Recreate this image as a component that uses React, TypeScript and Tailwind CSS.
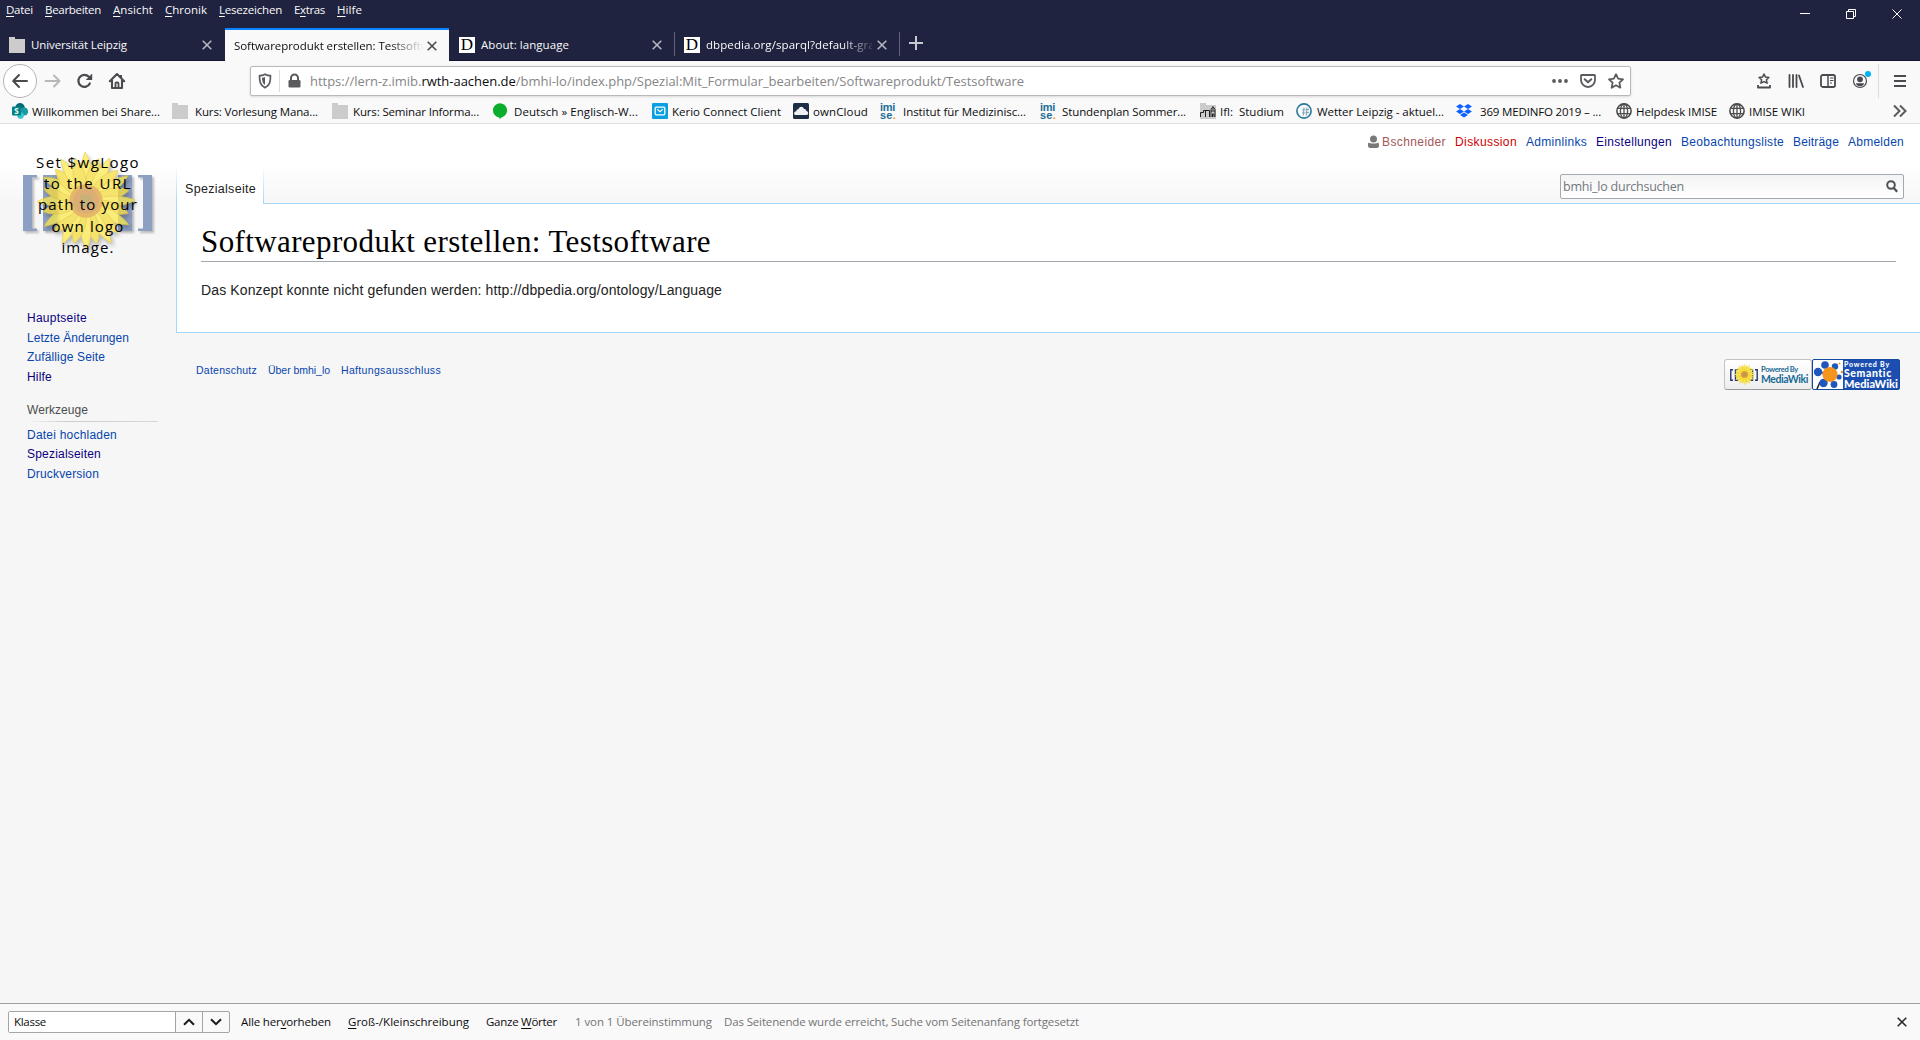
import React, { useLayoutEffect, useRef, useState } from 'react';

const UI = "font-['Open_Sans','Noto_Sans',sans-serif]";
const SANS = "font-['Liberation_Sans',Arial,sans-serif]";

/* Text run whose letter spacing is adjusted so that it fills a given width. */
function Fit({ w, className = '', children }: { w: number; className?: string; children: React.ReactNode }) {
  const ref = useRef<HTMLSpanElement>(null);
  const [ls, setLs] = useState(0);
  useLayoutEffect(() => {
    const el = ref.current;
    if (!el) return;
    const n = (el.textContent || '').length;
    setLs((w - el.getBoundingClientRect().width) / n);
  }, [w]);
  return (
    <span className={`block shrink-0 whitespace-nowrap ${className}`} style={{ width: w }}>
      <span ref={ref} style={{ letterSpacing: ls }}>{children}</span>
    </span>
  );
}

const Folder = () => (
  <svg width="16" height="16" viewBox="0 0 16 16" className="shrink-0"><path d="M0 0h6v2h10v14H0z" fill="#ccc" /></svg>
);
const Cross = ({ color }: { color: string }) => (
  <svg width="10" height="10" viewBox="0 0 10 10" className="shrink-0"><path d="M.7.7l8.6 8.6M9.3.7L.7 9.3" stroke={color} strokeWidth="1.6" /></svg>
);
const DIcon = () => (
  <span className="flex h-4 w-4 shrink-0 items-center justify-center bg-white font-['Liberation_Serif',serif] text-[17px] leading-4 text-black">D</span>
);
const Globe = () => (
  <svg width="16" height="16" viewBox="0 0 16 16" className="shrink-0" fill="none" stroke="#4d4d4f" strokeWidth="1.3">
    <circle cx="8" cy="8" r="7.1" strokeWidth="1.6" /><ellipse cx="8" cy="8" rx="3.6" ry="7" /><path d="M1.6 5.3h12.8M1.6 10.7h12.8M8 1v14" />
  </svg>
);
const Imise = () => (
  <span className="block h-4 w-4 shrink-0 font-['Liberation_Sans',sans-serif] text-[11px] font-bold leading-[8px] text-[#1c6e96]">
    <Fit w={15}>imi</Fit><Fit w={16}>se<span className="text-[#f39a1d]">.</span></Fit>
  </span>
);
const SharePoint = () => (
  <svg width="16" height="16" viewBox="0 0 16 16" className="shrink-0">
    <circle cx="8" cy="4.8" r="4.8" fill="#036c70" /><circle cx="12" cy="8.5" r="4" fill="#1a9ba1" /><circle cx="8.5" cy="12.6" r="3.3" fill="#37c6d0" />
    <rect x="0" y="3.5" width="9" height="9" rx=".8" fill="#038387" />
    <text x="4.5" y="10.8" textAnchor="middle" fontSize="8" fontWeight="700" fill="#fff" fontFamily="Open Sans">S</text>
  </svg>
);
const Bubble = () => (
  <svg width="16" height="16" viewBox="0 0 16 16" className="shrink-0"><path d="M7.500 .2a7.400 7.200 0 0 1 2.600 14L7.300 16v-1.500A7.300 7.200 0 0 1 7.500 .2z" fill="#0aad2c" /></svg>
);
const Kerio = () => (
  <svg width="16" height="16" viewBox="0 0 16 16" className="shrink-0"><rect width="16" height="16" rx="1" fill="#0a9fe0" /><rect x="3.200" y="4.200" width="9.600" height="7.600" rx="1" fill="none" stroke="#fff" strokeWidth="1.300" /><path d="M5.200 6.200L8 8.800l2.800-2.600" fill="none" stroke="#fff" strokeWidth="1.200" /></svg>
);
const OwnCloud = () => (
  <svg width="16" height="16" viewBox="0 0 16 16" className="shrink-0"><rect width="16" height="16" rx="1.5" fill="#1d2d44" /><path d="M2 11.900c-2-1.500-.2-4 1.200-3.300C3.400 6.500 4.600 6 5.500 6.300 6 3 10 2.700 11 6c1.600-.3 2.300.8 2.300 2 2.500.5 2.300 3.500.7 4z" fill="#eef1f5" /></svg>
);
const House = () => (
  <svg width="16" height="16" viewBox="0 0 16 16" className="shrink-0"><path d="M0 0h6v2h10v14H0z" fill="#ccc" /><path d="M.5 14V9.500h3V7.500h6v6.500M5.500 14V8M11 14V6.500l2-3 2 3V14M12.500 14v-3h1.500v3M11 8h4M12 6h2" fill="none" stroke="#222" strokeWidth="1" /></svg>
);
const Wetter = () => (
  <svg width="16" height="16" viewBox="0 0 16 16" className="shrink-0" fill="none"><circle cx="8" cy="8" r="7.100" stroke="#2a7699" strokeWidth="1.600" /><path d="M8 4.500l-.7 8M11 4.500l-.7 8M6 7l7-.6M6 10l7-.6" stroke="#7fa3b8" strokeWidth="1.100" /></svg>
);
const Dropbox = () => (
  <svg width="16" height="16" viewBox="0 0 16 16" className="shrink-0"><path d="M4 1l4 2.500L4 6 0 3.500zM12 1l4 2.500L12 6 8 3.500zM4 6l4 2.500L4 11 0 8.500zM12 6l4 2.500-4 2.500-4-2.500zM8 9.500l4 2.400L8 14.500l-4-2.600z" fill="#0f62fe" /></svg>
);

const menu: [string, number, string, string, string][] = [
  ['mr-3', 27, '', 'D', 'atei'],
  ['mr-3', 56, '', 'B', 'earbeiten'],
  ['mr-3', 40, '', 'A', 'nsicht'],
  ['mr-3', 42, '', 'C', 'hronik'],
  ['mr-3', 63, '', 'L', 'esezeichen'],
  ['mr-3', 31, 'E', 'x', 'tras'],
  ['', 25, '', 'H', 'ilfe'],
];

const bookmarks: [() => React.JSX.Element, string, string, number, string][] = [
  [SharePoint, 'ml-3', 'ml-1', 128, 'Willkommen bei Share...'],
  [Folder, 'ml-3', 'ml-[7px]', 123, 'Kurs: Vorlesung Mana...'],
  [Folder, 'ml-3.5', 'ml-[5px]', 126, 'Kurs: Seminar Informa...'],
  [Bubble, 'ml-[13px]', 'ml-1.5', 124, 'Deutsch » Englisch-W...'],
  [Kerio, 'ml-3.5', 'ml-1', 109, 'Kerio Connect Client'],
  [OwnCloud, 'ml-3', 'ml-1', 55, 'ownCloud'],
  [Imise, 'ml-3', 'ml-[7px]', 123, 'Institut für Medizinisc...'],
  [Imise, 'ml-3.5', 'ml-1.5', 124, 'Stundenplan Sommer...'],
  [House, 'ml-3.5', 'ml-1', 64, 'Ifl:\u00a0 Studium'],
  [Wetter, 'ml-3', 'ml-[5px]', 127, 'Wetter Leipzig - aktuel...'],
  [Dropbox, 'ml-3', 'ml-2', 121, '369 MEDINFO 2019 – ...'],
  [Globe, 'ml-[15px]', 'ml-1', 81, 'Helpdesk IMISE'],
  [Globe, 'ml-3', 'ml-1', 56, 'IMISE WIKI'],
];

const personal: [string, string, number][] = [
  ['Diskussion', 'text-[#c00]', 62],
  ['Adminlinks', 'text-[#0645ad]', 61],
  ['Einstellungen', 'text-[#0b0080]', 76],
  ['Beobachtungsliste', 'text-[#0645ad]', 103],
  ['Beiträge', 'text-[#0645ad]', 46],
  ['Abmelden', 'text-[#0645ad]', 56],
];

function MenuAndTabs() {
  return (
    <header className="flex h-[61px] shrink-0 flex-col border-b border-[#141631] bg-[#20233f] text-[11.500px] text-[#f9f9fa]">
      <div className="flex h-[29px] justify-between">
        <div className="flex pl-1.5 pt-0.5 leading-4">
          {menu.map(([gap, w, a, u, b]) => (
            <Fit key={u + b} w={w} className={gap}>{a}<span className="underline underline-offset-2">{u}</span>{b}</Fit>
          ))}
        </div>
        <svg width="138" height="28" viewBox="0 0 138 28" fill="none" stroke="#fff" strokeWidth="1">
          <path d="M18 13.500h10M64.500 11.500h7v7h-7zM66.500 11.500v-2h7v7h-2M110.500 9.500l9 9M119.500 9.500l-9 9" />
        </svg>
      </div>
      <div className="flex h-8 shrink-0 items-stretch">
        <div className="flex w-[225px] items-center pl-[9px] pt-px">
          <Folder /><Fit w={96} className="ml-1.5 pt-px">Universität Leipzig</Fit>
          <span className="ml-[75px]"><Cross color="#b5b6c1" /></span>
        </div>
        <div className="-mb-px flex w-56 items-center border-t-2 border-[#0a84ff] bg-[#f9f9fa] pl-[9px] text-[#0c0c0d]">
          <div className="w-[190px] overflow-hidden pt-px [mask-image:linear-gradient(to_right,black_155px,transparent_190px)]"><Fit w={213}>Softwareprodukt erstellen: Testsoftware</Fit></div>
          <span className="ml-[3px]"><Cross color="#4a4a4f" /></span>
        </div>
        <div className="flex w-[225px] items-center pl-2.5 pt-px">
          <DIcon /><Fit w={88} className="ml-1.5 pt-px">About: language</Fit>
          <span className="ml-[83px]"><Cross color="#b5b6c1" /></span>
        </div>
        <div className="my-1 w-px bg-[#62647a]" />
        <div className="flex w-56 items-center pl-[9px] pt-px">
          <DIcon />
          <div className="ml-1.5 w-[166px] overflow-hidden pt-px [mask-image:linear-gradient(to_right,black_135px,transparent_172px)]"><Fit w={183}>dbpedia.org/sparql?default-graph</Fit></div>
          <span className="ml-[5px]"><Cross color="#b5b6c1" /></span>
        </div>
        <div className="my-1 w-px bg-[#62647a]" />
        <svg width="32" height="30" viewBox="0 0 32 30"><path d="M16 8v14M9 15h14" stroke="#c7c8d1" strokeWidth="2" /></svg>
      </div>
    </header>
  );
}

function NavBar() {
  return (
    <div className="flex h-10 shrink-0 items-center bg-[#f9f9fa] text-[#4a4a4f]">
      <div className="ml-[3px] flex h-[34px] w-[34px] items-center justify-center rounded-full border border-[#b5b5b7] bg-white">
        <svg width="18" height="18" viewBox="0 0 18 18" fill="none" stroke="currentColor" strokeWidth="2" strokeLinecap="round" strokeLinejoin="round"><path d="M16 9H2.500M8 3L2.200 9 8 15" /></svg>
      </div>
      <svg className="ml-[7px]" width="18" height="18" viewBox="0 0 18 18" fill="none" stroke="#b8b8ba" strokeWidth="2" strokeLinecap="round" strokeLinejoin="round"><path d="M1.500 9h13.500M10 3.500L15.500 9 10 14.500" /></svg>
      <svg className="ml-[14px]" width="18" height="18" viewBox="0 0 18 18"><path d="M13.800 11.500A6 6 0 1 1 12.800 4.800" fill="none" stroke="currentColor" strokeWidth="2.200" strokeLinecap="round" /><path d="M16.200 1.600v6.400H9.800z" fill="currentColor" /></svg>
      <svg className="ml-[14px]" width="18" height="18" viewBox="0 0 18 18" fill="none" stroke="currentColor"><path d="M1.800 9.200L9 2l7.200 7.200M4 8v8h10V8" strokeWidth="2.100" strokeLinecap="round" strokeLinejoin="round" /><path d="M7.500 16v-4.500a1 1 0 0 1 1-1h1a1 1 0 0 1 1 1V16" strokeWidth="1.800" /><path d="M13 3v3" strokeWidth="2" /></svg>
      <div className="ml-[124px] flex h-[30px] w-[1381px] items-center rounded-[2px] border border-[#b9b9bb] bg-white shadow-sm">
        <svg className="ml-[7px]" width="14" height="16" viewBox="0 0 14 16"><path d="M7 1.200C5.500 2.200 3.500 2.700 1.500 2.700c0 6 .8 9.700 5.500 12 4.700-2.300 5.500-6 5.500-12-2 0-4-.5-5.500-1.500z" fill="none" stroke="#5b5b5f" strokeWidth="1.700" strokeLinejoin="round" /><path d="M7 4v8c-2.500-1.700-2.900-4-3-7.300C5.200 4.600 6.200 4.300 7 4z" fill="#5b5b5f" /></svg>
        <div className="ml-[7px] h-[22px] w-px bg-[#dcdcde]" />
        <svg className="ml-2" width="13" height="16" viewBox="0 0 13 16"><rect x=".5" y="7" width="12" height="7.500" rx="1.300" fill="#5b5b5f" /><path d="M3 8V5a3.500 3.500 0 0 1 7 0v3" fill="none" stroke="#5b5b5f" strokeWidth="2" /></svg>
        <Fit w={714} className="ml-[9px] pt-0.5 text-[13px] text-[#858587]">https://lern-z.imib.<span className="text-[#0c0c0d]">rwth-aachen.de</span>/bmhi-lo/index.php/Spezial:Mit_Formular_bearbeiten/Softwareprodukt/Testsoftware</Fit>
        <svg className="ml-auto" width="16" height="16" viewBox="0 0 16 16" fill="#5b5b5f"><circle cx="2" cy="8" r="1.900" /><circle cx="8" cy="8" r="1.900" /><circle cx="14" cy="8" r="1.900" /></svg>
        <svg className="ml-3" width="16" height="16" viewBox="0 0 16 16" fill="none" stroke="#5b5b5f" strokeLinecap="round" strokeLinejoin="round"><path d="M1.800 2h12.400a.8.8 0 0 1 .8.800V7A7 7 0 0 1 1 7V2.800a.8.8 0 0 1 .8-.8z" strokeWidth="1.800" /><path d="M4.700 6.200L8 9.300l3.300-3.100" strokeWidth="2" /></svg>
        <svg className="ml-3 mr-1.5" width="16" height="16" viewBox="0 0 16 16" fill="none" stroke="#5b5b5f" strokeWidth="1.800" strokeLinejoin="round"><path d="M8 1.200l2.100 4.500 4.900.6-3.600 3.400.9 5L8 12.300l-4.300 2.400.9-5L1 6.300l4.900-.6z" /></svg>
      </div>
      <div className="ml-[125px] flex items-center gap-4">
        <svg width="16" height="16" viewBox="0 0 16 16" fill="none" stroke="currentColor"><path d="M8 1l1.500 3.100 3.400.4-2.500 2.300.7 3.400L8 8.600l-3.100 1.600.7-3.400L3.100 4.500l3.400-.4z" strokeWidth="1.500" strokeLinejoin="round" /><path d="M2 12v2.500h12V12" strokeWidth="1.800" strokeLinejoin="round" /></svg>
        <svg width="16" height="16" viewBox="0 0 16 16" fill="none" stroke="currentColor" strokeWidth="1.800" strokeLinecap="round"><path d="M1.500 2v12M5 2v12M8.500 2v12M11 2.500l4 11.500" /></svg>
        <svg width="16" height="16" viewBox="0 0 16 16" fill="none" stroke="currentColor"><rect x="1" y="2" width="14" height="12" rx="1.800" strokeWidth="1.800" /><path d="M8 2v12" strokeWidth="1.500" /><path d="M10 5h3.500M10 7.500h3.500M10 10h2" strokeWidth="1" /></svg>
        <div className="relative h-4 w-4">
          <svg width="16" height="16" viewBox="0 0 16 16"><circle cx="8" cy="8" r="6.500" fill="none" stroke="currentColor" strokeWidth="1.200" /><circle cx="8" cy="6.300" r="2.900" fill="currentColor" /><path d="M3.800 10.200h8.400c-.5 2-2.300 3.100-4.200 3.100s-3.700-1.100-4.200-3.100z" fill="currentColor" /></svg>
          <span className="absolute -top-0.5 left-[13px] h-1.5 w-1.5 rounded-full bg-[#00b3f4]" />
        </div>
      </div>
      <div className="ml-2.5 h-[34px] w-px bg-[#dcdcde]" />
      <svg className="ml-[15px]" width="12" height="14" viewBox="0 0 12 14"><path d="M0 2h12M0 7h12M0 12h12" stroke="currentColor" strokeWidth="2" /></svg>
    </div>
  );
}

function Bookmarks() {
  return (
    <div className="flex h-[23px] shrink-0 items-start border-b border-[#e0e0e1] bg-[#f9f9fa] pt-0.5 text-[11.500px] leading-[17px] text-[#0c0c0d]">
      {bookmarks.map(([Icon, gap, tgap, w, label]) => (
        <div key={label} className={`flex h-[17px] items-start ${gap}`}><Icon /><Fit w={w} className={tgap}>{label}</Fit></div>
      ))}
      <svg className="ml-auto mr-[13px] mt-px" width="14" height="14" viewBox="0 0 14 14" fill="none" stroke="#5b5b5f" strokeWidth="2"><path d="M1 1.500L6.500 7 1 12.500M7 1.500L12.500 7 7 12.500" /></svg>
    </div>
  );
}

const petals = Array.from({ length: 24 }, (_, i) => i * 15);
function Flower({ size, fade }: { size: number; fade?: boolean }) {
  return (
    <svg width={size} height={size} viewBox="-50 -50 100 100" className={fade ? 'opacity-75 drop-shadow-[2px_3px_2px_rgba(0,0,0,0.35)]' : ''}>
      {petals.map((a, i) => (
        <path key={a} d={i % 2 ? 'M0 0C-9 -20 -7 -36 1 -45 7 -34 8 -20 0 0z' : 'M0 0C-8 -22 -5 -40 -1 -50 7 -38 8 -20 0 0z'} transform={`rotate(${a})`} fill={i % 2 ? '#f5dc3c' : '#fbe94e'} stroke="#e3c42c" strokeWidth=".8" />
      ))}
      <circle r="17" fill="#e0a23a" /><circle r="13" fill="#d3964a" /><circle r="7" fill="#b99a4f" />
    </svg>
  );
}

function Logo() {
  return (
    <div className="relative ml-[23px] mt-[24px] h-[118px] w-[130px]">
      <svg className="absolute left-0 top-[26px] drop-shadow-[2px_2px_1px_rgba(0,0,0,0.25)]" width="130" height="56" viewBox="0 0 130 56" fill="#8d9fc3">
        <path d="M0 0h14v2.500H9v51h5V56H0zM20 0h14v56H20zM129 0h-14v2.500h5v51h-5V56h14zM109 0H95v56h14z" />
      </svg>
      <div className="absolute left-[14px] top-[3px]"><Flower size={98} fade /></div>
      <div className="absolute left-0 top-[3px] flex w-[130px] flex-col items-center font-['Open_Sans',sans-serif] text-[15px] leading-[21.200px] text-black">
        <Fit w={104}>Set $wgLogo</Fit>
        <Fit w={88}>to the URL</Fit>
        <Fit w={100}>path to your</Fit>
        <Fit w={73}>own logo</Fit>
        <Fit w={53}>image.</Fit>
      </div>
    </div>
  );
}

function Sidebar() {
  return (
    <aside className={`w-44 shrink-0 ${SANS} text-[12px] leading-[19.500px] text-[#0645ad]`}>
      <div className="h-[185px] pt-px"><Logo /></div>
      <nav className="flex flex-col pl-[27px]">
        <Fit w={60} className="text-[#0b0080]">Hauptseite</Fit>
        <Fit w={102}>Letzte Änderungen</Fit>
        <Fit w={78}>Zufällige Seite</Fit>
        <Fit w={25} className="text-[#0b0080]">Hilfe</Fit>
      </nav>
      <h3 className="mt-[14px] pl-[27px] text-[#4d4d4d]"><Fit w={61}>Werkzeuge</Fit></h3>
      <div className="ml-[27px] h-px w-[131px] bg-gradient-to-r from-transparent via-[#ccc] via-30% to-[#d8d8d8]" />
      <nav className="mt-1 flex flex-col pl-[27px]">
        <Fit w={90}>Datei hochladen</Fit>
        <Fit w={74} className="text-[#0b0080]">Spezialseiten</Fit>
        <Fit w={72}>Druckversion</Fit>
      </nav>
    </aside>
  );
}

function Badges() {
  return (
    <div className="flex">
      <div className="flex h-[31px] w-[88px] items-center rounded-[3px] border border-[#c3c3c3] border-b-[#999] bg-gradient-to-b from-white to-[#eee] pl-[5px] text-[#186b96]">
        <div className="relative flex h-5 w-7 items-center justify-center">
          <svg className="absolute left-0 top-1" width="28" height="12" viewBox="0 0 28 12" fill="none" stroke="#26356d" strokeWidth="1.400"><path d="M3 .7H.8v10.600H3M8 .7H5.500v10.600H8M25 .7h2.200v10.600H25M20 .7h2.500v10.600H20" /></svg>
          <div className="relative"><Flower size={21} /></div>
        </div>
        <div className="ml-[3px] font-['Lato',sans-serif]">
          <Fit w={37} className="text-[7.500px] font-bold leading-[8px]">Powered By</Fit>
          <Fit w={47} className="text-[10.500px] font-bold leading-[10px]">MediaWiki</Fit>
        </div>
      </div>
      <div className="flex h-[31px] w-[88px] overflow-hidden rounded-[2px] border border-[#164a9e] bg-[#1b4eb0] text-white">
        <svg width="30" height="29" viewBox="0 0 30 29" className="shrink-0"><rect width="30" height="29" fill="#fff" />
          <path d="M7 22l-3 7" stroke="#222" strokeWidth="1.500" /><g fill="#1f57bd"><circle cx="12" cy="5" r="3.800" /><circle cx="5" cy="12" r="4.200" /><circle cx="10.500" cy="23" r="4.200" /><circle cx="21" cy="24.500" r="3.400" /><circle cx="22" cy="6.500" r="3.200" /><circle cx="26" cy="17" r="2.600" /></g>
          <path d="M17 14L12 5M17 14L5 12M17 14l-7 9M17 14l4 11M17 14l5-7M17 14l9 3" stroke="#1f57bd" strokeWidth="2" /><circle cx="17" cy="14.500" r="7.600" fill="#f7941d" /><circle cx="26.500" cy="3.500" r="1" fill="#f7941d" /><circle cx="29" cy="12" r="1.300" fill="#f7941d" /></svg>
        <div className="ml-px font-['Lato',sans-serif] font-black">
          <Fit w={46} className="text-[7px] leading-[8px]">Powered By</Fit>
          <Fit w={48} className="text-[10.500px] leading-[10px]">Semantic</Fit>
          <Fit w={54} className="text-[11px] leading-[11px]">MediaWiki</Fit>
        </div>
      </div>
    </div>
  );
}

function Wiki() {
  return (
    <main className={`flex min-h-0 flex-1 bg-[#f6f6f6] bg-[linear-gradient(to_bottom,#fff_0,#fff_40px,#f6f6f6_80px)] bg-[length:100%_80px] bg-no-repeat ${SANS}`}>
      <Sidebar />
      <div className="flex min-w-0 flex-1 flex-col">
        <div className="flex h-[79px] shrink-0 justify-between">
          <div className="flex items-end">
            <div className="h-[39px] w-px bg-gradient-to-b from-white to-[#a7d7f9]" />
            <div className="relative -mb-px flex h-[40px] w-[86px] items-center bg-white pl-2 pt-[10px] text-[12.500px] text-[#222]"><Fit w={71}>Spezialseite</Fit></div>
            <div className="h-[39px] w-px bg-gradient-to-b from-white to-[#a7d7f9]" />
          </div>
          <div className="flex flex-col items-end pr-4">
            <div className="mt-[10px] flex gap-[9px] text-[12px] leading-4 text-[#0645ad]">
              <div className="flex items-center">
                <svg width="14" height="14" viewBox="0 0 14 14" fill="#797979"><circle cx="5.500" cy="4" r="3.500" /><path d="M.5 7.500c1.500 1.400 8.500 1.400 10 0 .8 2 .8 3.500 0 4.700-1 1.200-9 1.200-10 0-.8-1.200-.8-2.700 0-4.700z" /></svg>
                <Fit w={64} className="text-[#a55858]">Bschneider</Fit>
              </div>
              {personal.map(([t, c, w]) => <Fit key={t} w={w} className={c}>{t}</Fit>)}
            </div>
            <div className={`mt-[24px] flex h-[25px] w-[344px] items-center justify-between rounded-[2px] border border-[#a2a9b1] bg-gradient-to-b from-[#f4f4f4] to-white pl-0.5 pr-[5px] text-[12.500px] text-[#72777d] ${UI}`}>
              <Fit w={121} className="pt-px">bmhi_lo durchsuchen</Fit>
              <svg width="12" height="13" viewBox="0 0 12 13" fill="none" stroke="#4e5357"><circle cx="5" cy="5" r="3.800" strokeWidth="2" /><path d="M7.800 8l3.400 3.800" strokeWidth="2.400" /></svg>
            </div>
          </div>
        </div>
        <section className="h-[130px] shrink-0 border border-r-0 border-[#a7d7f9] bg-white pl-6 pr-6 pt-5">
          <h1 className="h-[38px] border-b border-[#a2a9b1] font-['Liberation_Serif',Georgia,serif] text-[31px] leading-[36px] text-black"><Fit w={510}>Softwareprodukt erstellen: Testsoftware</Fit></h1>
          <p className="mt-[17px] text-[14px] leading-[22px] text-[#222]"><Fit w={521}>Das Konzept konnte nicht gefunden werden: http://dbpedia.org/ontology/Language</Fit></p>
        </section>
        <footer className="flex justify-between pl-5 pr-5 pt-[26px]">
          <div className="flex gap-[11px] pt-[3px] text-[10.500px] leading-4 text-[#0645ad]">
            <Fit w={61}>Datenschutz</Fit><Fit w={62}>Über bmhi_lo</Fit><Fit w={100}>Haftungsausschluss</Fit>
          </div>
          <Badges />
        </footer>
      </div>
    </main>
  );
}

function FindBar() {
  return (
    <div className="flex h-[37px] shrink-0 items-center border-t border-[#a0a0a2] bg-[#f9f9fa] pb-px pl-2 pr-[13px] text-[11.500px] text-[#0c0c0d]">
      <div className="flex h-[22px] w-[222px] items-stretch rounded-[2px] border border-[#a5a5a7]">
        <div className="flex w-[167px] items-center border-r border-[#a5a5a7] bg-white pl-[5px] pt-px"><Fit w={32}>Klasse</Fit></div>
        <div className="flex w-[27px] items-center justify-center border-r border-[#a5a5a7]"><svg width="12" height="8" viewBox="0 0 12 8" fill="none" stroke="#1a1a1b" strokeWidth="2"><path d="M1 6.800L6 1.800l5 5" /></svg></div>
        <div className="flex flex-1 items-center justify-center"><svg width="12" height="8" viewBox="0 0 12 8" fill="none" stroke="#1a1a1b" strokeWidth="2"><path d="M1 1.200l5 5 5-5" /></svg></div>
      </div>
      <Fit w={90} className="ml-[11px]">Alle her<span className="underline underline-offset-2">v</span>orheben</Fit>
      <Fit w={121} className="ml-[17px]"><span className="underline underline-offset-2">G</span>roß-/Kleinschreibung</Fit>
      <Fit w={71} className="ml-[17px]">Ganze <span className="underline underline-offset-2">W</span>örter</Fit>
      <Fit w={137} className="ml-[18px] text-[#737373]">1 von 1 Übereinstimmung</Fit>
      <Fit w={355} className="ml-3 text-[#737373]">Das Seitenende wurde erreicht, Suche vom Seitenanfang fortgesetzt</Fit>
      <span className="ml-auto"><Cross color="#2a2a2c" /></span>
    </div>
  );
}

export default function App() {
  return (
    <div className={`flex h-[1040px] w-[1920px] flex-col overflow-hidden ${UI}`}>
      <MenuAndTabs />
      <NavBar />
      <Bookmarks />
      <Wiki />
      <FindBar />
    </div>
  );
}
